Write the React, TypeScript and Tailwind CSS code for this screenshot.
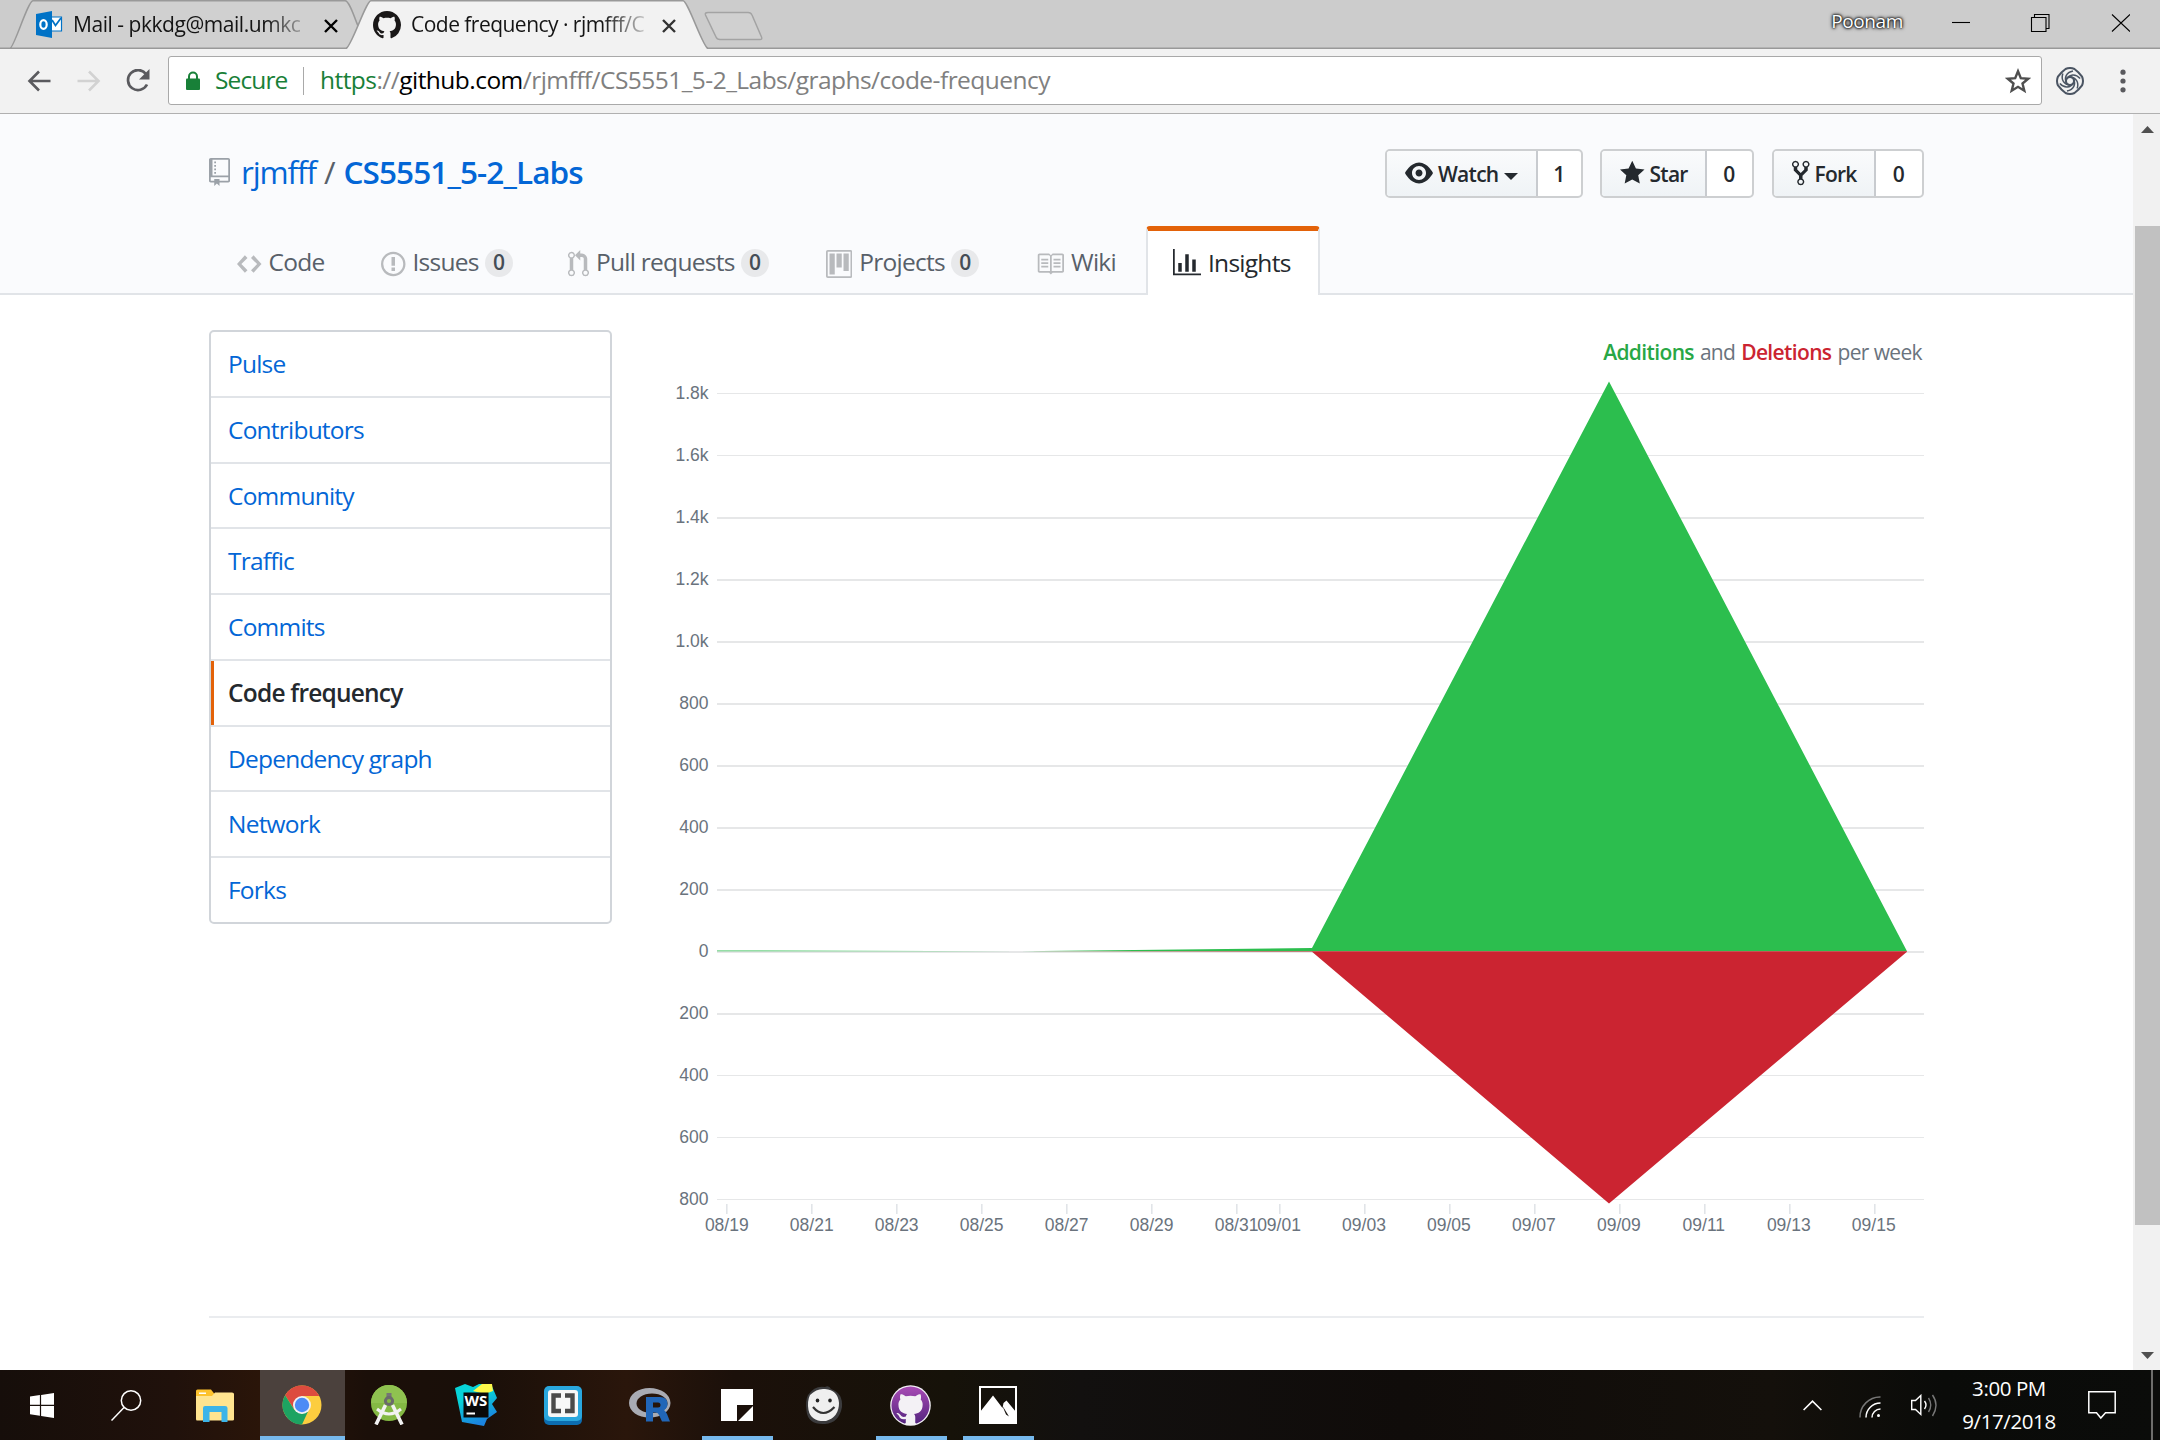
import React from "react";

const paths = {
  repo: "M4 9H3V8h1v1zm0-3H3v1h1V6zm0-2H3v1h1V4zm0-2H3v1h1V2zm8-1v12c0 .55-.45 1-1 1H6v2l-1.5-1.5L3 16v-2H1c-.55 0-1-.45-1-1V1c0-.55.45-1 1-1h10c.55 0 1 .45 1 1zm-1 10H1v2h2v-1h3v1h5v-2zm0-10H2v9h9V1z",
  code: "M9.5 3L8 4.5 11.5 8 8 11.5 9.5 13 14 8 9.5 3zm-5 0L0 8l4.5 5L6 11.5 2.5 8 6 4.5 4.5 3z",
  issue:
    "M7 2.3c3.14 0 5.7 2.56 5.7 5.7s-2.56 5.7-5.7 5.7A5.71 5.71 0 0 1 1.3 8c0-3.14 2.56-5.7 5.7-5.7zM7 1C3.14 1 0 4.14 0 8s3.14 7 7 7 7-3.14 7-7-3.14-7-7-7zm1 3H6v5h2V4zm0 6H6v2h2v-2z",
  pull: "M11 11.28V5c-.03-.78-.34-1.47-.94-2.06C9.46 2.35 8.78 2.03 8 2H7V0L4 3l3 3V4h1c.27.02.48.11.69.31.21.2.3.42.31.69v6.28A1.993 1.993 0 0 0 10 15a1.993 1.993 0 0 0 1-3.72zm-1 2.92c-.66 0-1.2-.55-1.2-1.2 0-.65.55-1.2 1.2-1.2.65 0 1.2.55 1.2 1.2 0 .65-.55 1.2-1.2 1.2zM4 3c0-1.11-.89-2-2-2a1.993 1.993 0 0 0-1 3.72v6.56A1.993 1.993 0 0 0 2 15a1.993 1.993 0 0 0 1-3.72V4.72c.59-.34 1-.98 1-1.72zm-.8 10c0 .66-.55 1.2-1.2 1.2-.65 0-1.2-.55-1.2-1.2 0-.65.55-1.2 1.2-1.2.65 0 1.2.55 1.2 1.2zM2 4.2C1.34 4.2.8 3.65.8 3c0-.65.55-1.2 1.2-1.2.65 0 1.2.55 1.2 1.2 0 .65-.55 1.2-1.2 1.2z",
  project:
    "M10 12h3V2h-3v10zm-4-2h3V2H6v8zm-4 4h3V2H2v12zm-1 1h13V1H1v14zM14 0H1a1 1 0 0 0-1 1v14a1 1 0 0 0 1 1h13a1 1 0 0 0 1-1V1a1 1 0 0 0-1-1z",
  book: "M3 5h4v1H3V5zm0 3h4V7H3v1zm0 2h4V9H3v1zm11-5h-4v1h4V5zm0 2h-4v1h4V7zm0 2h-4v1h4V9zm2-6v9c0 .55-.45 1-1 1H9.5l-1 1-1-1H2c-.55 0-1-.45-1-1V3c0-.55.45-1 1-1h5.5l1 1 1-1H15c.55 0 1 .45 1 1zm-8 .5L7.5 3H2v9h6V3.5zm7-.5H9.5l-.5.5V12h6V3z",
  graph: "M16 14v1H0V0h1v14h15zM5 13H3V8h2v5zm4 0H7V3h2v10zm4 0h-2V6h2v7z",
  eye: "M8.06 2C3 2 0 8 0 8s3 6 8.06 6C13 14 16 8 16 8s-3-6-7.94-6zM8 12c-2.2 0-4-1.78-4-4 0-2.2 1.8-4 4-4 2.22 0 4 1.8 4 4 0 2.22-1.78 4-4 4zm2-4c0 1.11-.89 2-2 2-1.11 0-2-.89-2-2 0-1.11.89-2 2-2 1.11 0 2 .89 2 2z",
  star: "M14 6l-4.9-.64L7 1 4.9 5.36 0 6l3.6 3.26L2.67 14 7 11.67 11.33 14l-.93-4.74L14 6z",
  fork: "M8 1a1.993 1.993 0 0 0-1 3.72V6L5 8 3 6V4.72A1.993 1.993 0 0 0 2 1a1.993 1.993 0 0 0-1 3.72V6.5l3 3v1.78A1.993 1.993 0 0 0 5 15a1.993 1.993 0 0 0 1-3.72V9.5l3-3V4.72A1.993 1.993 0 0 0 8 1zM2 4.2C1.34 4.2.8 3.65.8 3c0-.65.55-1.2 1.2-1.2.65 0 1.2.55 1.2 1.2 0 .65-.55 1.2-1.2 1.2zm3 10c-.66 0-1.2-.55-1.2-1.2 0-.65.55-1.2 1.2-1.2.65 0 1.2.55 1.2 1.2 0 .65-.55 1.2-1.2 1.2zm3-10c-.66 0-1.2-.55-1.2-1.2 0-.65.55-1.2 1.2-1.2.65 0 1.2.55 1.2 1.2 0 .65-.55 1.2-1.2 1.2z",
  mark: "M8 0C3.58 0 0 3.58 0 8c0 3.54 2.29 6.53 5.47 7.59.4.07.55-.17.55-.38 0-.19-.01-.82-.01-1.49-2.01.37-2.53-.49-2.69-.94-.09-.23-.48-.94-.82-1.13-.28-.15-.68-.52-.01-.53.63-.01 1.08.58 1.23.82.72 1.21 1.87.87 2.33.66.07-.52.28-.87.51-1.07-1.78-.2-3.64-.89-3.64-3.95 0-.87.31-1.59.82-2.15-.08-.2-.36-1.02.08-2.12 0 0 .67-.21 2.2.82.64-.18 1.32-.27 2-.27.68 0 1.36.09 2 .27 1.53-1.04 2.2-.82 2.2-.82.44 1.1.16 1.92.08 2.12.51.56.82 1.27.82 2.15 0 3.07-1.87 3.75-3.65 3.95.29.25.54.73.54 1.48 0 1.07-.01 1.93-.01 2.2 0 .21.15.46.55.38A8.013 8.013 0 0 0 16 8c0-4.42-3.58-8-8-8z",
};

// Octicon drawn at 1.75x: every glyph is 28px high, its width follows the glyph.
function Octicon({ name, w, className = "" }: { name: keyof typeof paths; w: number; className?: string }) {
  return (
    <svg width={w * 1.75} height={28} viewBox={`0 0 ${w} 16`} className={`shrink-0 ${className}`} fill="currentColor">
      <path fillRule="evenodd" d={paths[name]} />
    </svg>
  );
}

function CloseX({ className = "" }: { className?: string }) {
  return (
    <svg width="14" height="14" viewBox="0 0 14 14" className={`shrink-0 ${className}`}>
      <path d="M1 1L13 13M13 1L1 13" stroke="currentColor" strokeWidth="2.4" />
    </svg>
  );
}

function TabStrip() {
  return (
    <div className="relative flex h-[49px] shrink-0 bg-[#cccccc] text-[21px]">
      <svg width="2160" height="49" viewBox="0 0 2160 49" className="absolute inset-0">
        <path d="M0 48.3H2160" stroke="#999" strokeWidth="1.5" />
        <path d="M10 48.3C14 48 28 0.5 33 0.7H345C350 0.7 356 23 359 28L350 48.3Z" fill="#d0d0d0" stroke="#999" strokeWidth="1.5" />
        <path d="M346 49.5C350 49 366 0.7 371 0.7H683C688 0.7 704 49 708 49.5Z" fill="#f2f2f2" />
        <path d="M346 48.3C351 48 366 0.7 371 0.7H683C688 0.7 703 48 708 48.3" fill="none" stroke="#999" strokeWidth="1.5" />
        <path d="M708 12.5H748Q751 12.5 752 15L761.5 37Q762.500 39.500 760 39.500H720Q717 39.500 716 37L705.500 15Q704.500 12.500 708 12.500Z" fill="#d0d0d0" stroke="#a3a3a3" strokeWidth="1.5" />
      </svg>
      <div className="relative flex h-12 w-[338px] items-center pl-[36px]">
        <svg width="27" height="28" viewBox="0 0 27 28" className="mt-[2px] shrink-0">
          <path d="M15 6H25.500V20H15Z" fill="#fff" stroke="#0072c6" strokeWidth="1.2" />
          <path d="M16 9L19.500 14.500L25 7" fill="none" stroke="#0072c6" strokeWidth="1.8" />
          <path d="M0 3L16 0V27L0 24Z" fill="#0072c6" />
          <ellipse cx="7.500" cy="13.500" rx="3.200" ry="4.300" fill="none" stroke="#fff" strokeWidth="2.200" />
        </svg>
        <span className="ml-[10px] mt-[2px] w-[236px] whitespace-nowrap bg-gradient-to-r from-[#141414] from-82% to-[#14141420] bg-clip-text tracking-[-0.022em] text-transparent">
          Mail - pkkdg@mail.umkc
        </span>
        <CloseX className="ml-[16px] mt-[4px] text-black" />
      </div>
      <div className="relative flex h-12 w-[338px] items-center pl-[35px]">
        <Octicon name="mark" w={16} className="mt-[2px] text-[#191717]" />
        <span className="ml-[10px] mt-[2px] w-[234px] whitespace-nowrap bg-gradient-to-r from-[#141414] from-82% to-[#14141430] bg-clip-text tracking-[-0.025em] text-transparent">
          Code frequency · rjmfff/C
        </span>
        <CloseX className="ml-[17px] mt-[4px] text-[#333]" />
      </div>
      <div className="relative ml-auto flex h-[45px] items-center pr-[30px]">
        <span className="mb-[3px] mr-[49px] text-[19px] tracking-[-0.02em] text-white [text-shadow:0_0_2px_#000,0_0_3px_#000,0_0_4px_#222]">
          Poonam
        </span>
        <svg width="178" height="18" viewBox="0 0 178 18" fill="none" stroke="#000" strokeWidth="1.1" className="mt-px">
          <path d="M0 8.500H18" />
          <path d="M79.500 3.500H94V17.500H79.500ZM82.500 3.500V.500H97V14.500H94" />
          <path d="M160 .500L178 17.500M178 .500L160 17.500" />
        </svg>
      </div>
    </div>
  );
}

function Toolbar() {
  return (
    <div className="flex h-[65px] shrink-0 items-center border-b-[1.5px] border-[#b0b0b0] bg-[#f2f2f2] pb-px pl-[27px]">
      <svg width="24" height="22" viewBox="0 0 24 22" className="shrink-0" fill="none" stroke="#5a5a5e" strokeWidth="2.600">
        <path d="M23.500 11H2.500M12 1.500L2.500 11L12 20.500" />
      </svg>
      <svg width="24" height="22" viewBox="0 0 24 22" className="ml-[26px] shrink-0" fill="none" stroke="#d2d2d2" strokeWidth="2.600">
        <path d="M0.500 11H21.500M12 1.500L21.500 11L12 20.500" />
      </svg>
      <svg width="26" height="24" viewBox="0 0 26 24" className="ml-[24px] shrink-0">
        <path d="M21 5A10 10 0 1 0 22 15.500" fill="none" stroke="#5a5a5e" strokeWidth="2.700" />
        <path d="M24.500 0V10.500H14Z" fill="#5a5a5e" />
      </svg>
      <div className="ml-[17px] flex h-[49px] w-[1874px] items-center rounded-[3px] border-[1.5px] border-[#a9a9a9] bg-white pl-[17px] text-[24.5px]">
        <svg width="14" height="20" viewBox="0 0 14 20" className="shrink-0">
          <rect y="7.500" width="14" height="11.500" rx="1" fill="#188038" />
          <path d="M3 9V5.500a4 4 0 0 1 8 0V9" fill="none" stroke="#188038" strokeWidth="2" />
        </svg>
        <span className="ml-[15px] w-[72px] tracking-[-0.036em] text-[#188038]">Secure</span>
        <span className="ml-[16px] h-[28px] w-px bg-[#a9a9a9]" />
        <span className="ml-[16px] whitespace-nowrap tracking-[-0.022em] text-[#808080]">
          <span className="text-[#188038]">https</span>://<span className="text-black">github.com</span>
          /rjmfff/CS5551_5-2_Labs/graphs/code-frequency
        </span>
        <svg width="26" height="26" viewBox="0 0 26 26" className="ml-auto mr-[10px] shrink-0" fill="none" stroke="#4f4f4f" strokeWidth="2.400">
          <path d="M13 3.200L15.800 10.100L23.200 10.700L17.500 15.500L19.300 22.700L13 18.800L6.700 22.700L8.500 15.500L2.800 10.700L10.200 10.100Z" />
        </svg>
      </div>
      <svg width="28" height="28" viewBox="-14 -14 28 28" className="ml-[14px] shrink-0" fill="none" stroke="#4b5563" strokeWidth="2">
        <path d="M-4.500 -12Q0 -14 4.500 -12L8.500 -8.500L12 -4.500Q14 0 12 4.500L8.500 8.500L4.500 12Q0 14 -4.500 12L-8.500 8.500L-12 4.500Q-14 0 -12 -4.500L-8.500 -8.500Z" />
        <circle r="4" />
        {[0, 60, 120, 180, 240, 300].map((a) => (
          <path key={a} transform={`rotate(${a})`} d="M-3.500 2C-6 -3 -4 -8.500 3 -10" strokeWidth="1.500" />
        ))}
      </svg>
      <svg width="6" height="24" viewBox="0 0 6 24" className="ml-[36px] shrink-0" fill="#5a5a5e">
        <circle cx="3" cy="3.200" r="2.600" />
        <circle cx="3" cy="12" r="2.600" />
        <circle cx="3" cy="20.800" r="2.600" />
      </svg>
    </div>
  );
}

function CountButton({
  icon,
  iconW,
  label,
  count,
  width,
  labelWidth,
  caret,
}: {
  icon: keyof typeof paths;
  iconW: number;
  label: string;
  count: string;
  width: string;
  labelWidth: string;
  caret?: boolean;
}) {
  return (
    <div className={`flex h-[49px] ${width} overflow-hidden rounded-[5px] border-2 border-[#cdcfd1] bg-white text-[21px] font-semibold tracking-[-0.035em] text-[#24292e]`}>
      <div className={`flex ${labelWidth} items-center border-r-2 border-[#c8cbcf] bg-gradient-to-b from-[#fafbfc] to-[#eff3f6] pl-[18px]`}>
        <Octicon name={icon} w={iconW} className="mb-px" />
        <span className="ml-[5px] mt-[2px]">{label}</span>
        {caret && (
          <svg width="14" height="7" viewBox="0 0 14 7" className="ml-[6px] mt-[5px]">
            <path d="M0 0H14L7 7Z" fill="currentColor" />
          </svg>
        )}
      </div>
      <span className="flex flex-1 items-center justify-center pr-px pt-[2px]">{count}</span>
    </div>
  );
}

function NavItem({ icon, iconW, label, count, width }: { icon: keyof typeof paths; iconW: number; label: string; count?: string; width: string }) {
  return (
    <div className={`flex items-center ${width} shrink-0 pt-[4px] text-[#586069]`}>
      <Octicon name={icon} w={iconW} className="mt-[2px] text-[#b8babd]" />
      <span className="ml-[7px] whitespace-nowrap">{label}</span>
      {count && (
        <span className="ml-[6px] flex h-[28px] w-[28px] items-center justify-center rounded-full bg-[#e8e9eb] pt-px text-[21px] font-semibold text-[#444d56]">
          {count}
        </span>
      )}
    </div>
  );
}

function RepoHeader() {
  return (
    <header className="h-[181px] border-b-2 border-[#e1e4e8] bg-[#fafbfd] pl-[209px] pt-[35px]">
      <div className="flex h-[49px] w-[1715px] items-center">
        <Octicon name="repo" w={12} className="mb-[3px] text-[#9ba1a8]" />
        <h1 className="mb-[3px] ml-[11px] flex text-[31.5px] tracking-[-0.036em] text-[#0366d6]">
          <span>rjmfff</span>
          <span className="ml-[8px] mr-[9px] text-[#586069]">/</span>
          <span className="font-semibold tracking-[-0.028em]">CS5551_5-2_Labs</span>
        </h1>
        <div className="ml-auto flex justify-end gap-[17px]">
          <CountButton icon="eye" iconW={16} label="Watch" count="1" width="w-[198px]" labelWidth="w-[151px]" caret />
          <CountButton icon="star" iconW={14} label="Star" count="0" width="w-[154px]" labelWidth="w-[105px]" />
          <span className="-ml-[17px] w-px" />
          <CountButton icon="fork" iconW={10} label="Fork" count="0" width="w-[152px]" labelWidth="w-[102px]" />
        </div>
      </div>
      <nav className="mt-[28px] flex h-[69px] pl-[28px] text-[24.5px] tracking-[-0.03em]">
        <NavItem icon="code" iconW={14} label="Code" width="w-[144px]" />
        <NavItem icon="issue" iconW={14} label="Issues" count="0" width="w-[187px]" />
        <NavItem icon="pull" iconW={12} label="Pull requests" count="0" width="w-[258px]" />
        <NavItem icon="project" iconW={15} label="Projects" count="0" width="w-[210px]" />
        <NavItem icon="book" iconW={16} label="Wiki" width="w-[110px]" />
        <div className="flex w-[174px] items-center overflow-hidden rounded-t-[4px] border-x-2 border-t-[5px] border-x-[#e1e4e8] border-t-[#e36209] bg-white pl-[25px] text-[#24292e]">
          <Octicon name="graph" w={16} />
          <span className="ml-[7px]">Insights</span>
        </div>
      </nav>
    </header>
  );
}

const menu = ["Pulse", "Contributors", "Community", "Traffic", "Commits", "Code frequency", "Dependency graph", "Network", "Forks"];

function Sidebar() {
  return (
    <nav className="flex h-[594px] w-[403px] shrink-0 flex-col divide-y-2 divide-[#e1e4e8] rounded-[5px] border-2 border-[#d1d5da] text-[24.5px] tracking-[-0.032em]">
      {menu.map((m) =>
        m === "Code frequency" ? (
          <a key={m} className="relative flex flex-1 items-center pl-[17px] pt-px font-semibold tracking-[-0.032em] text-[#24292e]">
            <span className="absolute inset-y-0 left-0 w-[3px] bg-[#e36209]" />
            {m}
          </a>
        ) : (
          <a key={m} className="flex flex-1 items-center pl-[17px] pt-px text-[#0366d6]">
            {m}
          </a>
        )
      )}
    </nav>
  );
}

const yLabels = ["1.8k", "1.6k", "1.4k", "1.2k", "1.0k", "800", "600", "400", "200", "0", "200", "400", "600", "800"];
const xLabels: [string, number][] = [
  ["08/19", 0], ["08/21", 2], ["08/23", 4], ["08/25", 6], ["08/27", 8], ["08/29", 10], ["08/31", 12], ["09/01", 13],
  ["09/03", 15], ["09/05", 17], ["09/07", 19], ["09/09", 21], ["09/11", 23], ["09/13", 25], ["09/15", 27],
];

function Chart() {
  return (
    <svg width="1264" height="873" viewBox="660 372 1264 873" className="font-['Liberation_Sans',sans-serif] text-[17.5px]">
      {yLabels.map((l, i) => (
        <g key={i}>
          <rect x="717" y={Math.round(392.6 + i * 62.05)} width="1207" height={i > 1 && i < 11 ? 2 : 1} fill="#e6e7e8" />
          <text x="708.500" y={399 + i * 62} textAnchor="end" fill="#6a737d">
            {l}
          </text>
        </g>
      ))}
      {xLabels.map(([l, d]) => (
        <g key={l}>
          <rect x={Math.round(726 + d * 42.5)} y="1204" width="1.600" height="10" fill="#e1e4e8" />
          <text x={726.8 + d * 42.48} y="1231" textAnchor="middle" fill="#6a737d">
            {l}
          </text>
        </g>
      ))}
      <path d="M717 950.500L1020 951.200L1312 948L1609 381.500L1907 951.200H717Z" fill="#2cbe4e" />
      <path d="M1020 951.200L1312 951.800L1609 1203.500L1907 951.800V951.200Z" fill="#cb2431" />
    </svg>
  );
}

function TaskSlot({ children, active, open }: { children: React.ReactNode; active?: boolean; open?: boolean }) {
  return (
    <div className="relative flex w-[87px] shrink-0 items-center justify-center px-px">
      {active && <span className="absolute inset-x-px inset-y-0 border-b-4 border-[#76b9ed] bg-[#4b413d]" />}
      {open && <span className="absolute inset-x-[8px] bottom-0 h-1 bg-[#76b9ed]" />}
      <div className="relative mr-[2px]">{children}</div>
    </div>
  );
}

function Taskbar() {
  return (
    <footer className="flex h-[70px] shrink-0 bg-[linear-gradient(90deg,#160e0a_0%,#20110b_8%,#2a1509_12%,#1b0f09_17%,#190f09_22%,#2a160b_29%,#1b100a_34%,#161209_44%,#12100f_50%,#100c0a_65%,#14100b_82%,#0a0b09_90%,#0b0c0a_100%)]">
      <div className="flex w-[84px] items-center justify-center">
        <svg width="24" height="25" viewBox="0 0 24 25" fill="#fff">
          <path d="M0 3.500L9.900 2.100V11.800H0ZM11.100 1.900L24 0V11.800H11.100ZM0 13H9.900V22.700L0 21.300ZM11.100 13H24V25L11.100 23Z" />
        </svg>
      </div>
      <div className="flex w-[88px] items-center pl-[27px]">
        <svg width="31" height="31" viewBox="0 0 31 31" fill="none" stroke="#fff" strokeWidth="1.500">
          <circle cx="20" cy="10.500" r="9.700" />
          <path d="M13 17.500L.500 30.500" />
        </svg>
      </div>
      <TaskSlot>
        <svg width="38" height="33" viewBox="0 0 38 33">
          <path d="M0 2Q0 .500 1.500 .500H15L18.500 5V7H0Z" fill="#fdc22d" />
          <path d="M3 3.500H10V5H3Z" fill="#fff" />
          <path d="M0 7H16L19 3.500H36Q38 3.500 38 5V30.500Q38 31.500 36.500 31.500H1Q0 31.500 0 30Z" fill="#ffe48f" />
          <path d="M7 33V19Q7 17 9 17H29Q31.500 17 31.500 19V33H25.500V23H13.500V33Z" fill="#3cb4e8" />
        </svg>
      </TaskSlot>
      <TaskSlot active>
        <svg width="40" height="40" viewBox="-20 -20 40 40">
          <circle r="19.500" fill="#fccd3f" />
          <path d="M-16.900 -9.750A19.500 19.500 0 0 1 16.900 -9.750L17.200 -9H0L-8 4Z" fill="#dd4b3e" />
          <path d="M-16.900 -9.750L-7.500 5L0 9L6.500 5.500L0 19.500A19.500 19.500 0 0 1 -16.900 -9.750Z" fill="#1da362" />
          <circle r="9" fill="#f1f1f1" />
          <circle r="7.200" fill="#4c8bf5" />
        </svg>
      </TaskSlot>
      <TaskSlot>
        <svg width="36" height="40" viewBox="0 0 36 40">
          <circle cx="18" cy="18" r="18" fill="#84b944" />
          <path d="M0 18A18 18 0 0 1 36 18Z" fill="#8fc250" />
          <path d="M14.500 20L5 39.500M21.500 20L31 39.500" stroke="#f2f2f2" strokeWidth="3.600" />
          <path d="M6 24Q18 34 30 24" fill="none" stroke="#f2f2f2" strokeWidth="3" />
          <rect x="15.500" y="8" width="5" height="6" fill="#757575" />
          <circle cx="18" cy="16" r="3.600" fill="#84b944" stroke="#6b6b6b" strokeWidth="3" />
        </svg>
      </TaskSlot>
      <TaskSlot>
        <svg width="42" height="42" viewBox="0 0 42 42">
          <defs>
            <linearGradient id="ws" x1="0" y1="0" x2=".4" y2="1">
              <stop offset=".4" stopColor="#07d3d8" />
              <stop offset="1" stopColor="#1b84e0" />
            </linearGradient>
          </defs>
          <path d="M0 4L10 0L18 3L24 0H36L42 14L37 20L42 28L32 35L29 42L7 38Z" fill="url(#ws)" />
          <path d="M18 7L27 0H37L38 7L30 10Z" fill="#fcf84a" />
          <rect x="8.500" y="8.500" width="25" height="25" fill="#0a0a0a" />
          <path d="M11.500 28.500H20V30.500H11.500Z" fill="#fff" />
          <text x="21" y="22" textAnchor="middle" fill="#fff" className="font-['Open_Sans',sans-serif] text-[15px] font-bold">
            WS
          </text>
        </svg>
      </TaskSlot>
      <TaskSlot>
        <svg width="38" height="39" viewBox="0 0 38 39">
          <rect y="2" width="38" height="37" rx="5" fill="#0c6db1" />
          <rect width="38" height="35" rx="5" fill="#29a7de" />
          <rect x="4" y="4" width="30" height="27" rx="3" fill="#f7f7f7" />
          <path d="M17 9.500H9.500V25H17M21 9.500H28.500V25H21" fill="none" stroke="#4a4a4a" strokeWidth="4.400" />
        </svg>
      </TaskSlot>
      <TaskSlot>
        <svg width="42" height="34" viewBox="0 0 42 34">
          <path fillRule="evenodd" d="M20.500 0C32 0 41.500 6.500 41.500 15S32 29.500 20.500 29.500S0 23.500 0 15S9 0 20.500 0ZM23 5.500C14 5.500 7.500 10 7.500 15.500S14 25 23 25S38.500 21 38.500 15.500S32 5.500 23 5.500Z" fill="#a9abb3" />
          <path fillRule="evenodd" d="M17 9H31Q38.500 9 38.500 16Q38.500 20 35 22Q36.500 23 38 26L41 33.500H33L30 27Q29 24.500 27 24.500H24V33.500H17ZM24 14.500V19.500H29Q31.500 19.500 31.500 17T29 14.500Z" fill="#2166b8" />
        </svg>
      </TaskSlot>
      <TaskSlot open>
        <svg width="32" height="32" viewBox="0 0 32 32">
          <path d="M0 0H32V16H16V32H0ZM32 17V32H17Z" fill="#fff" />
        </svg>
      </TaskSlot>
      <TaskSlot>
        <svg width="38" height="40" viewBox="0 0 38 40">
          <path d="M3 10Q10 0 20 2Q24 0 26 4Q38 8 37 22Q34 38 20 39Q3 40 1.500 26Q0 16 3 10Z" fill="#3b3b3d" />
          <path d="M5 10Q12 3 20 4Q33 5 34 18Q34 32 21 36Q6 37 3.500 25Q2 16 5 10Z" fill="#efefef" />
          <ellipse cx="12.500" cy="15.500" rx="1.800" ry="2" fill="#222" />
          <ellipse cx="25" cy="15.500" rx="1.800" ry="2" fill="#222" />
          <path d="M8 22Q18 34 29.500 22" fill="none" stroke="#333" strokeWidth="2.200" />
        </svg>
      </TaskSlot>
      <TaskSlot open>
        <svg width="41" height="41" viewBox="0 0 41 41">
          <defs>
            <linearGradient id="gh" x1="0" y1="0" x2="0" y2="1">
              <stop offset="0" stopColor="#a84bb5" />
              <stop offset="1" stopColor="#54247f" />
            </linearGradient>
          </defs>
          <circle cx="20.500" cy="20.500" r="20.300" fill="#f3f1f5" />
          <g transform="translate(1.500 1.500) scale(2.375)">
            <path d={paths.mark} fill="url(#gh)" />
          </g>
        </svg>
      </TaskSlot>
      <TaskSlot open>
        <svg width="38" height="38" viewBox="0 0 38 38">
          <path d="M1 1H37V37H1Z" fill="none" stroke="#fff" strokeWidth="2" />
          <path d="M1 37V26L14 9.500L23.500 22L24.500 17L27.500 14.500L37 26V37Z" fill="#fff" />
          <path d="M23 19L30 30.500L27 28.500Z" fill="#15110d" />
        </svg>
      </TaskSlot>
      <div className="ml-auto flex items-center text-[20.5px] text-white">
        <svg width="19" height="11" viewBox="0 0 19 11" className="mt-px" fill="none" stroke="#fff" strokeWidth="1.600">
          <path d="M.600 10L9.500 1.200L18.400 10" />
        </svg>
        <svg width="22" height="22" viewBox="0 0 22 22" className="ml-[37px] mt-[3px]" fill="none" strokeWidth="1.500">
          <path d="M1 21.500A20 20 0 0 1 21.500 1" stroke="#777" />
          <path d="M7 21.500A14.500 14.500 0 0 1 21.500 7" stroke="#fff" />
          <path d="M13 21.500A8.500 8.500 0 0 1 21.500 13" stroke="#fff" />
          <circle cx="19.500" cy="19.500" r="1.500" fill="#fff" />
        </svg>
        <svg width="27" height="23" viewBox="0 0 27 23" className="ml-[30px]" fill="none" stroke="#fff" strokeWidth="1.400">
          <path d="M.700 6.500H4.500L9.800 1.500V20.500L4.500 15.500H.700Z" />
          <path d="M13.500 7Q16.500 11 13.500 15" />
          <path d="M17.500 4Q22 11 17.500 18M21.500 1Q28.500 11 21.500 22" stroke="#777" />
        </svg>
        <div className="ml-[24px] mr-px flex w-[94px] flex-col items-center whitespace-nowrap leading-[33px] tracking-[-0.02em]">
          <span>3:00 PM</span>
          <span>9/17/2018</span>
        </div>
        <svg width="28" height="29" viewBox="0 0 28 29" className="ml-[31px]" fill="none" stroke="#fff" strokeWidth="1.500">
          <path d="M.800 .800H27.200V21.800H17.500L12.800 27L8.500 21.800H.800Z" />
        </svg>
        <span className="ml-[35px] mr-[7px] h-[70px] w-[2px] bg-[#6d6d6b]" />
      </div>
    </footer>
  );
}

export default function App() {
  return (
    <div className="flex h-[1440px] w-[2160px] flex-col overflow-hidden bg-white font-['Open_Sans','Noto_Sans',sans-serif]">
      <TabStrip />
      <Toolbar />
      <div className="flex h-[1256px] shrink-0">
        <div className="w-[2133px]">
          <RepoHeader />
          <main className="ml-[209px] w-[1715px]">
            <div className="flex gap-[48px] pt-[35px]">
              <Sidebar />
              <section className="w-[1264px]">
                <p className="flex h-[42px] items-center justify-end gap-[6px] pr-[2px] pt-[3px] text-[21px] tracking-[-0.035em] text-[#6a737d]">
                  <b className="font-semibold tracking-[-0.03em] text-[#28a745]">Additions</b>
                  <span>and</span>
                  <b className="font-semibold tracking-[-0.03em] text-[#cb2431]">Deletions</b>
                  <span className="tracking-[-0.03em]">per week</span>
                </p>
                <Chart />
              </section>
            </div>
            <hr className="mt-[71px] border-t-2 border-[#eaecef]" />
          </main>
        </div>
        <div className="flex w-[27px] flex-col items-end bg-[#f1f1f1]">
          <svg width="13" height="7" viewBox="0 0 13 7" className="mr-[6px] mt-[12px]">
            <path d="M0 7H13L6.500 0Z" fill="#505050" />
          </svg>
          <div className="mt-[93px] h-[999px] w-[25px] bg-[#c1c1c1]" />
          <svg width="13" height="7" viewBox="0 0 13 7" className="mb-[11px] mr-[6px] mt-auto">
            <path d="M0 0H13L6.500 7Z" fill="#505050" />
          </svg>
        </div>
      </div>
      <Taskbar />
    </div>
  );
}
